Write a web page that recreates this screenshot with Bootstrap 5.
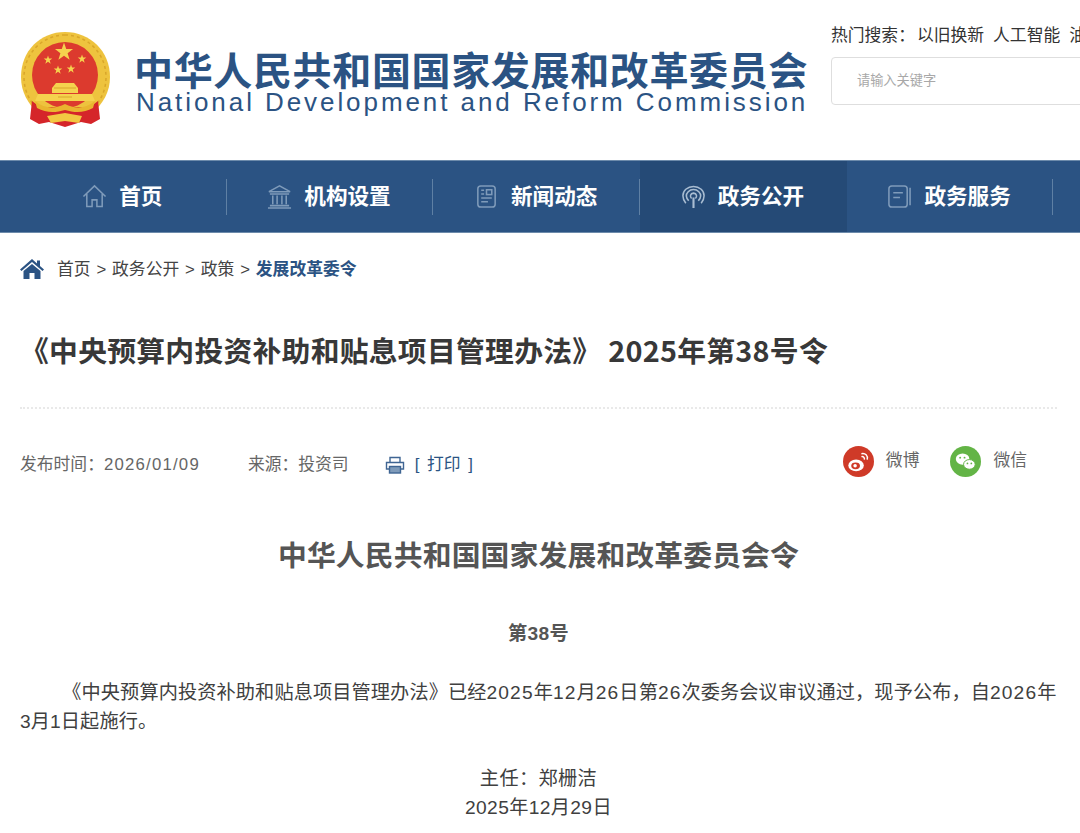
<!DOCTYPE html>
<html lang="zh-CN">
<head>
  <meta charset="UTF-8" />
  <meta name="viewport" content="width=device-width, initial-scale=1" />
  <title>中央预算内投资补助和贴息项目管理办法</title>
  <link href="https://cdn.jsdelivr.net/npm/bootstrap@5.3.0/dist/css/bootstrap.min.css" rel="stylesheet" />
  <style>
    html, body {
      margin: 0;
      height: 833px;
      overflow: hidden;
      background: #fff;
    }
    body {
      font-family: "Liberation Sans", "Noto Sans CJK SC", sans-serif;
      color: #3f3f3f;
    }
    .site-head {
      height: 160px;
      padding-left: 20px;
    }
    .emblem { width: 91px; height: 98px; margin-top: 31px; flex: none; }
    .brand { margin-left: 23px; margin-top: 47px; color: #2b5383; white-space: nowrap; width: 676px; flex: none; }
    .brand-cn { font-size: 39px; font-weight: 700; line-height: 42px; letter-spacing: .65px; font-family: "Noto Sans CJK SC", sans-serif; }
    .brand-en { font-size: 26px; line-height: 26px; letter-spacing: 2.93px; padding-left: 2px; }
    .search-side { margin-left: 21px; white-space: nowrap; width: 400px; flex: none; }
    .hot-words { font-size: 16.8px; line-height: 24px; margin-top: 24px; color: #333; }
    .hot-words span { margin-right: 9px; }
    .hot-words span:first-child { margin-right: 2px; }
    .search-box {
      margin-top: 9px;
      height: 48px;
      border: 1px solid #dedede;
      border-radius: 4px;
      padding-left: 25px;
      font-size: 13.2px;
      line-height: 46px;
      color: #a8a8a8;
    }
    .main-bar {
      height: 73px;
      background: #2b5383;
      border-top: 1px solid #6d8bab;
      border-bottom: 1px solid #6d8bab;
      padding-left: 20px;
    }
    .bar-item {
      width: 206.7px;
      height: 100%;
      padding: 0 2px 3px 0;
      color: #fff;
      font-size: 21.6px;
      font-weight: 700;
      text-decoration: none;
      font-family: "Noto Sans CJK SC", sans-serif;
      gap: 12px;
      position: relative;
    }
    .bar-item::after {
      content: "";
      position: absolute;
      right: 0;
      top: 18px;
      height: 36px;
      width: 1px;
      background: #5f80a4;
    }
    .bar-item.current { background: #254a76; }
    .bar-item.current::after { display: none; }
    .bar-icon { width: 25px; height: 25px; flex: none; margin-top: 3px; }
    .crumbs {
      padding: 25px 0 0 20px;
      height: 72px;
      font-size: 16.8px;
      line-height: 24px;
      word-spacing: 1.2px;
      color: #444;
    }
    .crumbs b { color: #2b5383; font-weight: 700; }
    .crumbs svg { margin-right: 13px; }
    .doc-title {
      margin: 25px 23px 0 20px;
      padding-bottom: 37px;
      border-bottom: 2px dotted #e9e9e9;
      font-size: 28.8px;
      font-weight: 700;
      line-height: 40px;
      letter-spacing: .27px;
      color: #383838;
      white-space: nowrap;
      font-family: "Noto Sans CJK SC", sans-serif;
    }
    .doc-meta {
      margin: 36px 53px 0 20px;
      height: 40px;
      font-size: 16.8px;
      color: #666;
    }
    .meta-date { letter-spacing: 1.2px; }
    .meta-src { margin-left: 48px; }
    .meta-print { margin-left: 36px; margin-right: 10px; }
    .print-link { color: #2b5383; word-spacing: 3px; }
    .share-box { margin-bottom: 8px; }
    .share-name { margin-left: 12px; }
    .share-name.first { margin-right: 31px; }
    .doc-body { padding: 0 23px 0 20px; color: #404040; font-size: 19.2px; line-height: 29px; letter-spacing: .36px; }
    .doc-h {
      margin-top: 49px;
      font-size: 28.8px;
      font-weight: 700;
      line-height: 40px;
      letter-spacing: .15px;
      color: #555;
      text-align: center;
      font-family: "Noto Sans CJK SC", sans-serif;
    }
    .doc-no { margin-top: 45px; font-weight: 700; text-align: center; color: #555; }
    .doc-p { margin: 30px -3px 0 0; text-indent: 2.2em; letter-spacing: .1px; }
    .doc-p i { font-style: normal; letter-spacing: 1.1px; }
    .doc-sign { margin-top: 28px; text-align: center; }
  </style>
</head>
<body>

  <!-- Header -->
  <header class="site-head d-flex overflow-hidden">
    <svg class="emblem" viewBox="0 0 91 98">
      <defs>
        <polygon id="star5" points="0,-10 2.350,-3.200 9.500,-3.100 3.800,1.200 5.900,8.100 0,4 -5.900,8.100 -3.800,1.200 -9.500,-3.100 -2.350,-3.200"/>
      </defs>
      <path d="M45 1C20 1 1 20 1 46c0 15 7 27 17 36h54c11-9 18-21 18-36C90 20 70 1 45 1z" fill="#eec33e"/>
      <path d="M45 4C23 4 4 22 4 46c0 13 5 24 14 32M45 4c22 0 41 18 41 42 0 13-5 24-14 32" fill="none" stroke="#d9a62a" stroke-width="1.500" stroke-dasharray="3 3"/>
      <circle cx="45" cy="44" r="33" fill="#dc3a2e"/>
      <g fill="#f5d24e">
        <use href="#star5" transform="translate(44 21) scale(.95)"/>
        <use href="#star5" transform="translate(28 29) scale(.45)"/>
        <use href="#star5" transform="translate(62 28) scale(.45)"/>
        <use href="#star5" transform="translate(38 39) scale(.45)"/>
        <use href="#star5" transform="translate(51 38) scale(.45)"/>
        <path d="M36 52h18l4 5v5H32v-5z"/>
        <path d="M18 63h54l3 7H15z"/>
      </g>
      <path d="M34 57h22M38 66h14" stroke="#d9a62a" stroke-width="1"/>
      <path d="M12 70l-2 18 9 5 10-2 16 5 16-5 10 2 9-5-2-18-8 6H20z" fill="#d5252a"/>
      <path d="M15 70c10 8 20 8 30 3 10 5 20 5 30-3l-2 7c-9 5-18 5-28 2-10 3-19 3-28-2z" fill="#e9b52f"/>
      <path d="M27 85l18-3 17 3-3 7-14-2-14 2z" fill="#f2c842"/>
    </svg>
    <div class="brand">
      <div class="brand-cn">中华人民共和国国家发展和改革委员会</div>
      <div class="brand-en">National Development and Reform Commission</div>
    </div>
    <div class="search-side">
      <div class="hot-words"><span>热门搜索：</span><span>以旧换新</span><span>人工智能</span><span>油价调整</span></div>
      <div class="search-box">请输入关键字</div>
    </div>
  </header>

  <!-- Nav -->
  <nav class="main-bar d-flex overflow-hidden">
    <a class="bar-item d-flex align-items-center justify-content-center" href="#">
      <svg class="bar-icon" viewBox="0 0 26 26" fill="none" stroke="#7f9bba" stroke-width="1.6"><path d="M1.500 13L13 2l11.500 11M5 10.500V23.500h5.500v-7h5v7H21V10.500"/></svg>
      首页
    </a>
    <a class="bar-item d-flex align-items-center justify-content-center" href="#">
      <svg class="bar-icon" viewBox="0 0 26 26" fill="none" stroke="#7f9bba" stroke-width="1.6"><path d="M13 2L2 8h22z"/><path d="M3 10.500h20M6 12v9M10.500 12v9M15.500 12v9M20 12v9M3 22.500h20M1 25h24"/></svg>
      机构设置
    </a>
    <a class="bar-item d-flex align-items-center justify-content-center" href="#">
      <svg class="bar-icon" viewBox="0 0 26 26" fill="none" stroke="#7f9bba" stroke-width="1.600"><rect x="4" y="2" width="18" height="22" rx="3"/><rect x="13" y="6" width="5.500" height="5"/><path d="M7.500 6.500h3M7.500 10.500h3M7.500 14.500h11M7.500 18.500h7"/></svg>
      新闻动态
    </a>
    <a class="bar-item current d-flex align-items-center justify-content-center" href="#">
      <svg class="bar-icon" viewBox="0 0 26 26" fill="none" stroke="#a9bdd2" stroke-width="1.600"><path d="M5 20C1 15 1 9 5 5.500c4.500-4 11.500-4 16 0 4 3.500 4 9.500 0 14.500M8 17.500C5 14 5 10.500 7.500 8c3-3 8-3 11 0 2.500 2.500 2.500 6 -.500 9.500M11 15c-2-2-1.500-5 2-5.500 3.500.5 4 3.500 2 5.500"/><path d="M13 14v11" stroke-width="2.200"/></svg>
      政务公开
    </a>
    <a class="bar-item d-flex align-items-center justify-content-center" href="#">
      <svg class="bar-icon" viewBox="0 0 26 26" fill="none" stroke="#7f9bba" stroke-width="1.600"><rect x="2" y="2" width="19" height="22" rx="3"/><path d="M6.500 9h10M6.500 14h7M24 4v18"/></svg>
      政务服务
    </a>
  </nav>

  <!-- Breadcrumb -->
  <div class="crumbs d-flex align-items-start">
    <svg width="24" height="22" viewBox="0 0 24 22" fill="#2b5383"><path d="M12 1L0 11.500l1.500 1.500L12 4l10.500 9 1.500-1.500-4-3.500V2.500h-3v3z"/><path d="M12 6L3.500 13v8h6v-6h5v6h6v-8z"/></svg>
    <span>首页 &gt; 政务公开 &gt; 政策 &gt; <b>发展改革委令</b></span>
  </div>

  <!-- Title -->
  <h1 class="doc-title">《中央预算内投资补助和贴息项目管理办法》 2025年第38号令</h1>

  <div class="doc-meta d-flex align-items-center">
    <span>发布时间：<span class="meta-date">2026/01/09</span></span>
    <span class="meta-src">来源：投资司</span>
    <svg class="meta-print" width="20" height="18" viewBox="0 0 20 18" fill="none" stroke="#3f6593" stroke-width="1.400"><path d="M5 6V1.500h10V6M4.500 13H1.500V6.500h17V13h-3"/><rect x="4.500" y="10.500" width="11" height="6.500" fill="#7f9bba"/></svg>
    <span class="print-link">[ 打印 ]</span>
    <div class="share-box ms-auto d-flex align-items-center">
      <svg width="31" height="31" viewBox="0 0 32 32"><circle cx="16" cy="16" r="16" fill="#cf3a28"/><ellipse cx="13.500" cy="20" rx="8" ry="6" fill="#fff"/><ellipse cx="13" cy="20.500" rx="4.500" ry="3.500" fill="#cf3a28"/><circle cx="12.500" cy="20.500" r="1.800" fill="#fff"/><path d="M19 8c4-1 7 2 6 6M19 11c2-.5 3.500 1 3 3" stroke="#fff" stroke-width="1.500" fill="none"/></svg>
      <span class="share-name first">微博</span>
      <svg width="31" height="31" viewBox="0 0 32 32"><circle cx="16" cy="16" r="16" fill="#63b446"/><ellipse cx="13" cy="13.500" rx="7" ry="5.800" fill="#fff"/><ellipse cx="20" cy="19" rx="6" ry="5" fill="#fff" stroke="#63b446"/><circle cx="10.500" cy="12" r="1" fill="#63b446"/><circle cx="15" cy="12" r="1" fill="#63b446"/><circle cx="18" cy="18" r=".9" fill="#63b446"/><circle cx="22" cy="18" r=".9" fill="#63b446"/></svg>
      <span class="share-name">微信</span>
    </div>
  </div>

  <!-- Article -->
  <article class="doc-body">
    <div class="doc-h">中华人民共和国国家发展和改革委员会令</div>
    <div class="doc-no">第38号</div>
    <p class="doc-p">《中央预算内投资补助和贴息项目管理办法》已经<i>2025</i>年<i>12</i>月<i>26</i>日第<i>26</i>次委务会议审议通过，现予公布，自<i>2026</i>年3月1日起施行。</p>
    <div class="doc-sign">主任：郑栅洁<br />2025年12月29日</div>
  </article>

  <script src="https://cdn.jsdelivr.net/npm/bootstrap@5.3.0/dist/js/bootstrap.bundle.min.js"></script>
</body>
</html>
